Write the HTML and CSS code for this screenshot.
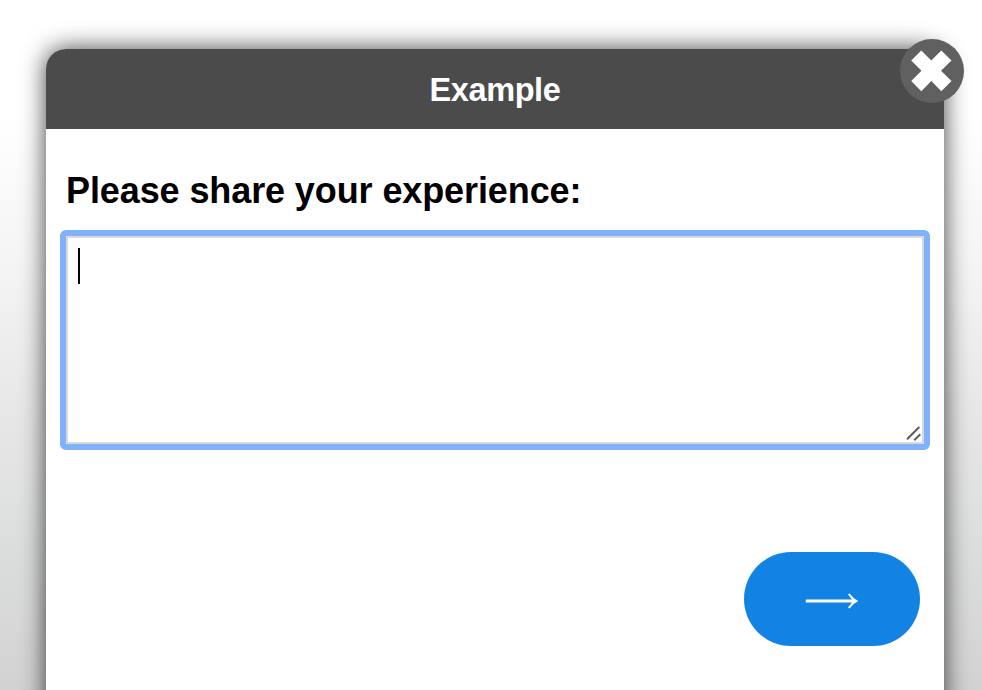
FILE: index.html
```
<!DOCTYPE html>
<html lang="en">
<head>
<meta charset="utf-8">
<title>Example</title>
<link rel="stylesheet" href="styles.css">
</head>
<body>
<main class="modal">
  <header class="modal-header">
    <h1 class="title">Example</h1>
    <button class="close" aria-label="Close">
      <svg width="64" height="64" viewBox="0 0 64 64"><path d="M21.3 11.5 31.3 21.5 41.3 11.5 51.5 21.5 41 31.8 51.5 42 41.3 52.2 31.3 42 21.3 52.2 11.2 42 21.5 31.8 11.2 21.5Z" fill="#fff"/></svg>
    </button>
  </header>
  <section class="modal-body">
    <label class="question" for="answer">Please share your experience:</label>
    <div class="field">
      <textarea class="answer" id="answer"></textarea>
      <span class="caret"></span>
      <svg class="grip" width="16" height="16" viewBox="0 0 16 16"><path d="M1 13.3 13.3 1M8.2 14.3 14.3 8.2" fill="none" stroke="#5c5c5c" stroke-width="2"/></svg>
    </div>
    <div class="actions">
      <button class="next" aria-label="Next">
        <svg width="54" height="16" viewBox="0 0 54 16"><path d="M.8 6.6H47L43 1.6 44.6.4Q48 5.4 53.3 8 48 10.6 44.6 15.6L43 14.4 47 9.4H.8Z" fill="#fff"/></svg>
      </button>
    </div>
  </section>
</main>
</body>
</html>
```
FILE: styles.css
```
* { box-sizing: border-box; }
body {
  margin: 0;
  height: 690px;
  overflow: hidden;
  padding: 49px 38px 0 46px;
  font-family: "Liberation Sans", Arial, sans-serif;
  background: linear-gradient(#fff 0, #fff 110px, #f5f5f5 260px, #e8e8e8 400px, #dcdedd 545px, #d2d2d2 690px);
}
button { border: 0; padding: 0; }
svg { display: block; }
.modal {
  height: 720px;
  background: #fff;
  border-radius: 20px 20px 0 0;
  box-shadow: 0 0 24px rgba(0, 0, 0, .75);
}
.modal-header {
  position: relative;
  display: flex;
  justify-content: center;
  align-items: center;
  height: 80px;
  background: #4b4b4b;
  border-radius: 20px 20px 0 0;
}
.title { margin: 0; padding-top: 1px; color: #fff; font-size: 32.5px; line-height: 36px; letter-spacing: -.4px; }
.close {
  position: absolute;
  top: -10px;
  right: -20px;
  width: 64px;
  height: 64px;
  border-radius: 50%;
  background: #606060;
}
.modal-body { padding: 41px 20px 0; }
.question { display: block; font-size: 36px; font-weight: bold; line-height: 42px; letter-spacing: -.1px; color: #000; }
.field {
  position: relative;
  height: 220px;
  margin: 18px -6px 0;
  border: 6px solid #80b1fb;
  border-radius: 6px;
}
.answer {
  display: block;
  width: 100%;
  height: 100%;
  border: 2px solid #d9d9d9;
  border-radius: 0;
  outline: 0;
  resize: none;
  background: #fff;
}
.caret { position: absolute; left: 12px; top: 12px; width: 2px; height: 36px; background: #000; }
.grip { position: absolute; right: 2px; bottom: 2px; }
.actions { display: flex; justify-content: flex-end; padding: 102px 4px 0 0; }
.next {
  display: flex;
  align-items: center;
  justify-content: center;
  width: 176px;
  height: 94px;
  padding-top: 4px;
  border-radius: 47px;
  background: #1283e2;
}
```
